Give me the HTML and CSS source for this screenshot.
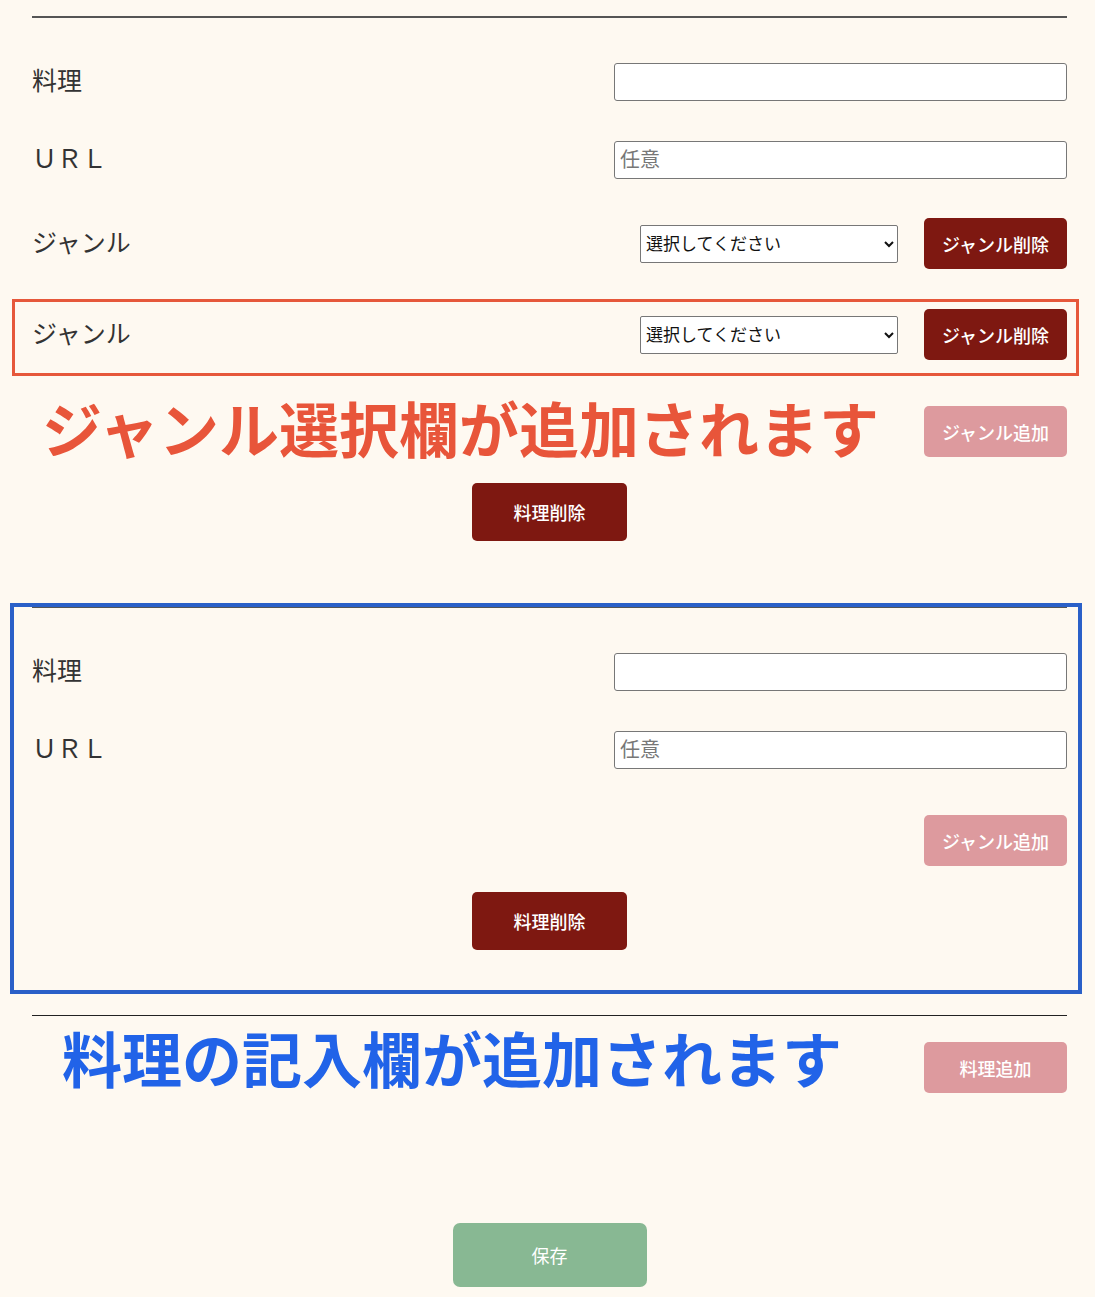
FILE: index.html
```html
<!DOCTYPE html>
<html lang="ja">
<head>
<meta charset="utf-8">
<title>料理登録</title>
<link rel="stylesheet" href="styles.css">
</head>
<body>
<div class="page">
  <section class="dish">
    <div class="row text-row"><label class="label">料理</label><input class="field" type="text"></div>
    <div class="row text-row gap40"><label class="label">ＵＲＬ</label><input class="field" type="text" placeholder="任意"></div>
    <div class="row genre-row">
      <label class="label">ジャンル</label>
      <div class="genre-ctrl">
        <select class="genre-select"><option>選択してください</option></select>
        <button class="btn btn-dark btn-genre">ジャンル削除</button>
      </div>
    </div>
    <div class="row genre-row genre-next">
      <label class="label">ジャンル</label>
      <div class="genre-ctrl">
        <select class="genre-select"><option>選択してください</option></select>
        <button class="btn btn-dark btn-genre">ジャンル削除</button>
      </div>
    </div>
    <div class="row add-row"><button class="btn btn-pink btn-genre">ジャンル追加</button></div>
    <div class="row delete-row"><button class="btn btn-dark btn-del">料理削除</button></div>
  </section>

  <section class="dish">
    <div class="row text-row"><label class="label">料理</label><input class="field" type="text"></div>
    <div class="row text-row gap40"><label class="label">ＵＲＬ</label><input class="field" type="text" placeholder="任意"></div>
    <div class="row add-row"><button class="btn btn-pink btn-genre">ジャンル追加</button></div>
    <div class="row delete-row"><button class="btn btn-dark btn-del">料理削除</button></div>
  </section>

  <div class="footer">
    <div class="row add-dish-row"><button class="btn btn-pink btn-genre">料理追加</button></div>
    <div class="row save-row"><button class="btn btn-save">保存</button></div>
  </div>

  <div class="mark mark-orange"></div>
  <div class="note note-orange">ジャンル選択欄が追加されます</div>
  <div class="mark mark-blue"></div>
  <div class="note note-blue">料理の記入欄が追加されます</div>
</div>
</body>
</html>
```

FILE: styles.css
```css
* { box-sizing: border-box; }
html, body { margin: 0; padding: 0; }
body {
  background: #fef9f1;
  font-family: "Noto Sans CJK JP", "Noto Sans", sans-serif;
  color: #333;
}
.page {
  position: relative;
  padding: 16px 28px 0 32px;
  height: 1297px;
  overflow: hidden;
}
.dish {
  border-top: 2px solid #555;
  padding-top: 45px;
  margin-bottom: 65px;
  display: flex;
  flex-direction: column;
}
.row { display: flex; align-items: center; }
.text-row { justify-content: space-between; height: 38px; }
.gap40 { margin-top: 40px; }
.label {
  font-size: 25px;
  line-height: 1;
  padding-bottom: 5px;
  color: #333;
}
.field {
  width: 453px;
  height: 38px;
  border: 1px solid #777;
  border-radius: 3px;
  background: #fff;
  font-family: inherit;
  font-size: 20px;
  padding: 0 5px 4px;
  outline: none;
}
.field::placeholder { color: #777; }
.genre-row {
  justify-content: space-between;
  height: 51px;
  margin-top: 39px;
}
.genre-next { margin-top: 40px; }
.genre-ctrl { display: flex; align-items: center; gap: 26px; }
.genre-select {
  width: 258px;
  height: 38px;
  border: 1px solid #777;
  border-radius: 2px;
  background: #fff;
  font-family: inherit;
  font-size: 17px;
  color: #111;
  padding: 0 1px 2px;
}
.btn {
  border: none;
  color: #fff;
  font-family: inherit;
  font-weight: 500;
  font-size: 18px;
  border-radius: 5px;
  padding: 0;
  cursor: pointer;
}
.btn-dark { background: #7e1811; }
.btn-pink { background: #dd9a9e; }
.btn-genre { width: 143px; height: 51px; }
.add-row { justify-content: flex-end; margin-top: 46px; }
.delete-row { justify-content: center; margin-top: 26px; }
.btn-del { width: 155px; height: 58px; }
.footer {
  border-top: 1px solid #222;
  padding-top: 26px;
}
.add-dish-row { justify-content: flex-end; }
.save-row { justify-content: center; margin-top: 130px; }
.btn-save {
  width: 194px;
  height: 64px;
  background: #88b893;
  border-radius: 7px;
  font-weight: 400;
}
.mark { position: absolute; pointer-events: none; }
.mark-orange {
  left: 12px; top: 299px; width: 1067px; height: 77px;
  border: 3px solid #e6583b;
}
.mark-blue {
  left: 10px; top: 603px; width: 1072px; height: 391px;
  border: 4px solid #2a60c8;
}
.note {
  position: absolute;
  font-size: 60px;
  line-height: 60px;
  font-weight: 700;
  white-space: nowrap;
}
.note-orange { left: 42px; top: 397px; color: #e8553a; }
.note-blue { left: 62px; top: 1027px; color: #2163e8; }
```
